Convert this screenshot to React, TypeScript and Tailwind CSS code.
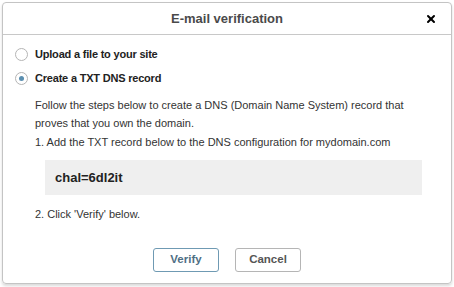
import { X } from 'lucide-react';

function Radio({ checked }: { checked?: boolean }) {
  return (
    <span className="w-[13px] h-[13px] rounded-full border border-[#b5b5b5] bg-white flex items-center justify-center shrink-0">
      {checked && <span className="w-[5px] h-[5px] rounded-full bg-[#5b8fb0]" />}
    </span>
  );
}

export default function App() {
  return (
    <div className="w-[454px] h-[287px] bg-white p-[2px] font-['Liberation_Sans',Arial,sans-serif] text-[#333]">
      <div className="w-[450px] h-[282px] border border-[#c4c4c4] rounded-[4px] shadow-[0_2px_3px_rgba(0,0,0,0.15)] flex flex-col overflow-hidden">
        <div className="h-[32px] shrink-0 border-b border-[#c8c8c8] flex items-center justify-center relative">
          <span className="text-[13px] font-bold text-[#4a4a4a]">E-mail verification</span>
          <X className="absolute right-[14px] top-[10px] w-[12px] h-[12px] text-black" strokeWidth={4} />
        </div>

        <div className="flex flex-col pl-[12px] pr-[29px] pt-[12px]">
          <label className="flex items-center gap-[7px] h-[14px]">
            <Radio />
            <span className="text-[11px] tracking-[-0.2px] font-bold text-[#222]">Upload a file to your site</span>
          </label>
          <label className="flex items-center gap-[7px] h-[14px] mt-[10px]">
            <Radio checked />
            <span className="text-[11px] tracking-[-0.2px] font-bold text-[#222]">Create a TXT DNS record</span>
          </label>

          <div className="pl-[20px] mt-[11px] text-[11px] leading-[18px] text-[#333]">
            <p>Follow the steps below to create a DNS (Domain Name System) record that proves that you own the domain.</p>
            <p className="mt-[1px]">1. Add the TXT record below to the DNS configuration for mydomain.com</p>
            <div className="ml-[10px] mt-[9px] h-[35px] bg-[#efefef] flex items-center pl-[10px] text-[13px] font-bold text-[#222]">
              chal=6dl2it
            </div>
            <p className="mt-[10px]">2. Click 'Verify' below.</p>
          </div>
        </div>

        <div className="flex justify-center gap-[16px] mt-[25px]">
          <button className="w-[66px] h-[24px] rounded-[3px] border border-[#6f9ab3] bg-white text-[11.5px] font-bold text-[#4f6f85]">
            Verify
          </button>
          <button className="w-[66px] h-[24px] rounded-[3px] border border-[#b5b5b5] bg-white text-[11.5px] font-bold text-[#555]">
            Cancel
          </button>
        </div>
      </div>
    </div>
  );
}
